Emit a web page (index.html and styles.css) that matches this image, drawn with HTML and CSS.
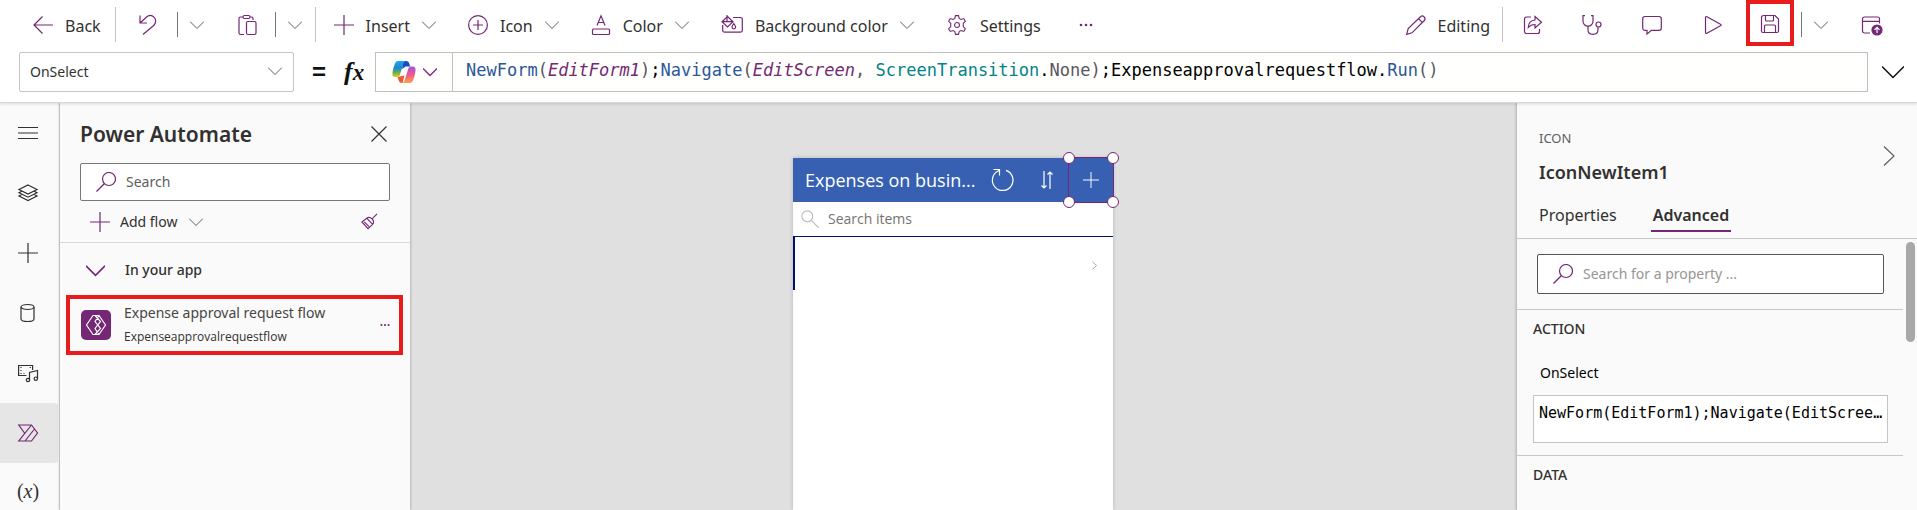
FILE: index.html
```html
<!DOCTYPE html>
<html lang="en">
<head>
<meta charset="utf-8">
<title>Power Apps Studio</title>
<link rel="stylesheet" href="styles.css">
</head>
<body>
<svg class="sprite" aria-hidden="true">
  <symbol id="chevron" viewBox="0 0 14 14"><path d="M0 3.500l7 7 7-7"/></symbol>
  <symbol id="search" viewBox="0 0 20 20"><circle cx="13" cy="7" r="6.500"/><path d="M8.500 11.500L.5 19.500"/></symbol>
  <symbol id="plus" viewBox="0 0 20 20"><path d="M10 0v20M0 10h20"/></symbol>
</svg>
<div class="app">
  <header class="header">
    <div class="toolbar">
      <div class="tools">
        <button class="tool back"><svg class="icon" viewBox="0 0 20 20"><path d="M20 10H1M9.500 1.500L1 10l8.500 8.500"/></svg><span>Back</span></button>
        <i class="rule tall"></i>
        <button class="tool undo" aria-label="Undo"><svg class="icon" viewBox="0 0 20 20"><path d="M2 .5v7.500h7M2.500 7.500L8 2.500C11-.2 14 .2 16 2.200s2.500 5.500-.3 8.300L5 19.500"/></svg></button>
        <i class="rule"></i>
        <button class="tool drop" aria-label="Undo options"><svg class="chev"><use href="#chevron"/></svg></button>
        <button class="tool paste" aria-label="Paste"><svg class="icon" viewBox="0 0 20 20"><path d="M7 19.500H3.500a1.500 1.500 0 0 1-1.500-1.500V3.500A1.500 1.500 0 0 1 3.500 2H6m7 0h1.500A1.500 1.500 0 0 1 16 3.500V5"/><rect x="6" y=".5" width="7" height="3" rx="1.500"/><rect x="9.500" y="6.500" width="9.500" height="13" rx="1.500"/></svg></button>
        <i class="rule"></i>
        <button class="tool drop last" aria-label="Paste options"><svg class="chev"><use href="#chevron"/></svg></button>
        <i class="rule tall"></i>
        <div class="commands">
          <button class="tool"><svg class="icon"><use href="#plus"/></svg><span>Insert</span><svg class="chev"><use href="#chevron"/></svg></button>
          <button class="tool"><svg class="icon" viewBox="0 0 20 20"><circle cx="10" cy="10" r="9.400"/><path d="M10 5v10M5 10h10"/></svg><span>Icon</span><svg class="chev"><use href="#chevron"/></svg></button>
          <button class="tool"><svg class="icon" viewBox="0 0 20 20"><path d="M6 10.500L10 .8l4 9.700M7.300 7.500h5.400"/><rect x="1.500" y="14" width="17" height="5.500" rx="1"/></svg><span>Color</span><svg class="chev"><use href="#chevron"/></svg></button>
          <button class="tool"><svg class="icon wide" viewBox="0 0 22 20"><path d="M6 0v7M6.500 1.500l5.500 5.300-5.500 5.200L1 6.700zM1.500 6.700h10M12 2.500h7.500a1.800 1.800 0 0 1 1.800 1.800v11a1.800 1.800 0 0 1-1.800 1.800h-16a1.800 1.800 0 0 1-1.800-1.800V10M12.800 8.500c1.200 1.700 1.800 2.700 1.800 3.500a1.800 1.800 0 0 1-3.600 0c0-.8.600-1.800 1.800-3.500z"/></svg><span>Background color</span><svg class="chev"><use href="#chevron"/></svg></button>
          <button class="tool"><svg class="icon wide" viewBox="0 0 22 22"><path d="M9.300.7h3.400l.7 3.100 2 1.100 3-1 1.800 3-2.300 2.200v3.800l2.300 2.200-1.800 3-3-1-2 1.100-.7 3.100H9.300l-.7-3.100-2-1.100-3 1-1.800-3 2.300-2.200V9.100L1.800 6.900l1.800-3 3 1 2-1.100z"/><circle cx="11" cy="11" r="2.700"/></svg><span>Settings</span></button>
          <button class="tool more" aria-label="More commands"><svg class="dots" viewBox="0 0 14 4"><circle cx="2" cy="2" r="1.300"/><circle cx="7" cy="2" r="1.300"/><circle cx="12" cy="2" r="1.300"/></svg></button>
        </div>
      </div>
      <div class="tools end">
        <button class="tool editing"><svg class="icon" viewBox="0 0 20 20"><path d="M.7 19.300l1.500-5.800L14.500 1.700a2.700 2.700 0 0 1 3.800 3.800L6 17.800zM12.500 3.600l4 4"/></svg><span>Editing</span></button>
        <i class="rule tall"></i>
        <button class="tool share" aria-label="Share"><svg class="icon" viewBox="0 0 20 20"><path d="M8 2H3.500A2 2 0 0 0 1.500 4v12.500a2 2 0 0 0 2 2h11a2 2 0 0 0 2-2V14M12 1.500l6.500 5.700L12 13V9.500c-3 0-5 .8-6.700 3C5.500 8 8 5.200 12 5z"/></svg></button>
        <button class="tool check" aria-label="App checker"><svg class="icon" viewBox="0 0 20 20"><path d="M3 .7H1v5.500a5 5 0 0 0 10 0V.7H9M6 11.200v3.500c0 3 2 4.600 4.800 4.600s5.200-1.600 5.200-4.600v-2.500"/><circle cx="16.500" cy="9.500" r="2.500"/></svg></button>
        <button class="tool comment" aria-label="Comments"><svg class="icon" viewBox="0 0 20 20"><path d="M3 1.500h14A2.300 2.300 0 0 1 19.300 4v9a2.300 2.300 0 0 1-2.300 2.300H9.500L5 19v-3.700H3A2.300 2.300 0 0 1 .7 13V4A2.300 2.300 0 0 1 3 1.500z"/></svg></button>
        <button class="tool play" aria-label="Preview the app"><svg class="icon" viewBox="0 0 20 20"><path d="M2.500 2.500c0-.8.700-1.200 1.400-.8l13.600 7.500c.8.400.8 1.200 0 1.600L3.900 18.300c-.7.400-1.400 0-1.400-.8z"/></svg></button>
        <button class="tool save" aria-label="Save"><svg class="icon" viewBox="0 0 20 20"><path d="M3.500 1.500H15L18.500 5v12a1.500 1.500 0 0 1-1.500 1.500H3A1.500 1.500 0 0 1 1.500 17V3.500a2 2 0 0 1 2-2zM5.500 1.500V6A1 1 0 0 0 6.500 7h6a1 1 0 0 0 1-1V1.500M4.500 18.500V12a1 1 0 0 1 1-1h9a1 1 0 0 1 1 1v6.500"/></svg></button>
        <i class="rule"></i>
        <button class="tool drop" aria-label="Save options"><svg class="chev"><use href="#chevron"/></svg></button>
        <button class="tool publish" aria-label="Publish"><svg class="icon wide" viewBox="0 0 22 20"><path d="M9 18H3.500a2 2 0 0 1-2-2V4a2 2 0 0 1 2-2h13a2 2 0 0 1 2 2v4.500M1.500 6.300h17"/><circle class="solid" cx="16" cy="15" r="5"/><path class="white" d="M16 18v-5.500M13.500 14.800l2.500-2.500 2.500 2.500"/></svg></button>
      </div>
    </div>
    <div class="formula-row">
      <div class="property">
        <select aria-label="Property"><option>OnSelect</option></select>
        <svg class="chev"><use href="#chevron"/></svg>
      </div>
      <span class="equals">=</span>
      <span class="fx"><b>f</b>x</span>
      <div class="formula">
        <button class="copilot" aria-label="Copilot">
          <svg class="copilot-logo" viewBox="0 0 24 22">
            <defs>
              <linearGradient id="cool" x1="0" y1="0" x2="0" y2="1"><stop offset="0" stop-color="#1ba6ee"/><stop offset=".45" stop-color="#1f86c9"/><stop offset=".7" stop-color="#5bb35a"/><stop offset="1" stop-color="#f2c511"/></linearGradient>
              <linearGradient id="warm" x1="0" y1="0" x2="0" y2="1"><stop offset="0" stop-color="#a550ea"/><stop offset=".5" stop-color="#ee5b86"/><stop offset="1" stop-color="#fba052"/></linearGradient>
            </defs>
            <path fill="#1a49c0" d="M11 0h3c2 0 2.800 1 3.300 2.800l.9 2.700h-4.500L10 8z"/>
            <path fill="#ee5a35" d="M5.500 16l7-1.500L10.500 22H10c-2 0-2.800-1-3.300-2.800z"/>
            <path fill="url(#cool)" d="M6.500 0H14c-1.500.3-2.200 1.500-2.700 3L8 13.500C7.400 15.300 6.500 16 5 16H3.600C1 16 0 14.500.5 11.500 1 8 2 5 3 2.500 3.700.8 4.700 0 6.500 0z"/>
            <path fill="url(#warm)" d="M17.500 22H10c1.500-.3 2.200-1.500 2.700-3L16 8.500C16.600 6.700 17.500 5.500 19 5.500h1.400c2.600 0 3.600 1.500 3.100 4.500-.5 3.500-1.500 7-2.500 9.500-.7 1.700-1.700 2.500-3.500 2.500z"/>
          </svg>
          <svg class="chev"><use href="#chevron"/></svg>
        </button>
        <code class="code"><span class="fn">NewForm</span><span class="pn">(</span><em>EditForm1</em><span class="pn">)</span>;<span class="fn">Navigate</span><span class="pn">(</span><em>EditScreen</em><span class="pn">,</span> <span class="en">ScreenTransition</span>.<span class="pn">None)</span>;Expenseapprovalrequestflow.<span class="fn">Run</span><span class="pn">()</span></code>
      </div>
      <button class="expand" aria-label="Expand formula bar"><svg class="chev"><use href="#chevron"/></svg></button>
    </div>
  </header>
  <main class="body">
    <nav class="rail">
      <button aria-label="Menu"><svg class="icon" viewBox="0 0 20 20"><path d="M0 4.500h20M0 10h20M0 15.500h20"/></svg></button>
      <button aria-label="Tree view"><svg class="icon" viewBox="0 0 20 20"><path d="M10 2l9 4.500-9 4.500-9-4.500zM3.800 8.200L1 9.700l9 4.500 9-4.500-2.800-1.500M3.800 11.500L1 13l9 4.500 9-4.500-2.800-1.500"/></svg></button>
      <button aria-label="Insert"><svg class="icon"><use href="#plus"/></svg></button>
      <button aria-label="Data"><svg class="icon" viewBox="0 0 20 20"><ellipse cx="9.500" cy="4" rx="6.500" ry="2.500"/><path d="M3 4v12c0 1.500 2.700 2.500 6.500 2.500S16 17.500 16 16V4"/></svg></button>
      <button aria-label="Media"><svg class="icon" viewBox="0 0 20 20"><path d="M8.500 12.500H.6v-10h14v4.500"/><path stroke-dasharray="1 2" d="M3 4v8M12.300 4v3M2.500 10.500h6"/><path d="M11.500 17V9.500l8-2v8"/><circle cx="10" cy="17" r="1.700"/><circle cx="17.800" cy="15.700" r="1.700"/></svg></button>
      <button class="active" aria-label="Power Automate"><svg class="icon" viewBox="0 0 20 20"><path d="M6.500 10L.8 2h12.700l6 8-6 8H.8L13.500 2M7 18l9.500-12"/></svg></button>
      <button class="vars" aria-label="Variables">(<i>x</i>)</button>
    </nav>
    <section class="panel">
      <div class="panel-head"><h2>Power Automate</h2><button class="close" aria-label="Close"><svg class="icon" viewBox="0 0 16 16"><path d="M.5.5l15 15M15.500.5l-15 15"/></svg></button></div>
      <label class="search"><svg class="icon"><use href="#search"/></svg><input type="text" placeholder="Search" aria-label="Search flows"></label>
      <div class="add-row">
        <button class="tool add"><svg class="icon"><use href="#plus"/></svg><span>Add flow</span><svg class="chev"><use href="#chevron"/></svg></button>
        <button class="tool" aria-label="Clear unused flows"><svg class="broom" viewBox="0 0 18 18"><path d="M17 1l-5 5M6 5.500C8 4 10 4.500 11.700 6.200s2 4 .6 5.800M6 5.500l6.300 6.500M6 5.500L1 9.500l6.500 7 4.800-4.500M3.500 9.500l5 5"/></svg></button>
      </div>
      <button class="group"><svg class="chev"><use href="#chevron"/></svg><span>In your app</span></button>
      <article class="flow">
        <svg class="flow-logo" viewBox="0 0 30 30"><rect width="30" height="30" rx="5"/><path d="M5.500 15L12 5.500h6L24.500 15 18 24.500h-6zM14 5.500l5.500 6L14 18.500l4 6M18 5.500l-4 6 5.500 7-5.500 6"/></svg>
        <div class="flow-text"><strong>Expense approval request flow</strong><small>Expenseapprovalrequestflow</small></div>
        <button class="tool" aria-label="More actions"><svg class="dots small" viewBox="0 0 14 4"><circle cx="2" cy="2" r="1.500"/><circle cx="7" cy="2" r="1.500"/><circle cx="12" cy="2" r="1.500"/></svg></button>
      </article>
    </section>
    <section class="canvas">
      <div class="phone">
        <div class="phone-head">
          <h3>Expenses on busin...</h3>
          <button aria-label="Refresh"><svg class="reload" viewBox="0 0 24 24"><path d="M15 2.400A10.300 10.300 0 1 1 7 3L8.500 2M2.500 1.500h6v6"/></svg></button>
          <button aria-label="Sort"><svg class="sort" viewBox="0 0 12 20"><path d="M3 1v17M.5 15.500L3 18l2.500-2.500M9 19V2M6.500 4.500L9 2l2.500 2.500"/></svg></button>
          <button class="selected" aria-label="New item"><svg class="new"><use href="#plus"/></svg><i class="tl"></i><i class="tr"></i><i class="bl"></i><i class="br"></i></button>
        </div>
        <label class="phone-search"><svg viewBox="0 0 20 20"><circle cx="7" cy="7" r="6"/><path d="M11.500 11.500l8 8"/></svg><input type="text" placeholder="Search items" aria-label="Search items"></label>
        <div class="gallery"><svg viewBox="0 0 6 10"><path d="M.5.5L5.500 5 .5 9.500"/></svg></div>
      </div>
    </section>
    <aside class="props">
      <div class="props-head">
        <div><p>ICON</p><h2>IconNewItem1</h2></div>
        <button aria-label="Collapse"><svg viewBox="0 0 12 20"><path d="M1 .5L11 10 1 19.500"/></svg></button>
      </div>
      <div class="tabs" role="tablist"><button role="tab">Properties</button><button role="tab" aria-selected="true">Advanced</button></div>
      <div class="props-scroll">
        <div class="props-body">
          <div class="search-wrap"><label class="search"><svg class="icon"><use href="#search"/></svg><input type="text" placeholder="Search for a property ..." aria-label="Search for a property"></label></div>
          <section class="action"><h4>ACTION</h4><label for="onselect">OnSelect</label><textarea id="onselect" rows="1">NewForm(EditForm1);Navigate(EditScree…</textarea></section>
          <section class="action"><h4>DATA</h4></section>
        </div>
        <div class="track"><i class="thumb"></i></div>
      </div>
    </aside>
  </main>
</div>
</body>
</html>
```
FILE: styles.css
```css
* { box-sizing: border-box; }
body {
  margin: 0;
  font: 14px/20px "Noto Sans", "Open Sans", sans-serif;
  color: #323130;
  background: #fff;
}
.app { display: flex; flex-direction: column; height: 100vh; overflow: hidden; }
h2, h3, h4, p { margin: 0; }
button, input, textarea, select { font: inherit; color: inherit; }
button { border: 0; padding: 0; background: none; display: flex; align-items: center; justify-content: center; }
svg { display: block; flex: none; fill: none; stroke: #742774; stroke-width: 1.2; overflow: visible; }
.sprite { position: absolute; width: 0; height: 0; }
.icon { width: 20px; height: 20px; }
.icon.wide { width: 22px; }
.chev { width: 14px; height: 14px; stroke: #605e5c; stroke-width: 1; }
.dots { width: 14px; height: 4px; fill: #742774; stroke: none; }
.dots.small { width: 10px; }

.header { flex: none; position: relative; z-index: 2; background: #fff; border-bottom: 1px solid #d8d8d8; box-shadow: 0 1px 3px #0002; }
.toolbar { display: flex; justify-content: space-between; height: 52px; padding-bottom: 3px; }
.tools { display: flex; align-items: center; padding-left: 33px; }
.tools.end { padding: 0 34px 0 0; }
.tool { gap: 12px; font-size: 16px; line-height: 24px; white-space: nowrap; }
.toolbar .tool span { padding-top: 2px; }
.rule { width: 1px; height: 25px; background: #777; }
.rule.tall { height: 35px; background: #c4c4c4; }
.back { margin-right: 14px; }
.undo { margin: 0 19px 0 22px; }
.drop { margin-left: 12px; }
.drop.last { margin-right: 13px; }
.paste { margin: 0 18px 0 33px; }
.commands { display: flex; gap: 32px; padding-left: 18px; }
.more { margin-left: 6px; }
.editing { margin-right: 12px; }
.share { margin-left: 20px; }
.check { margin-left: 39px; }
.comment { margin-left: 40px; }
.play { margin-left: 41px; }
.save { width: 48px; height: 46px; margin: 0 7px 0 23px; padding-top: 2px; align-self: flex-start; border: 4px solid #e81c1c; }
.publish { margin-left: 33px; }
.publish .solid { fill: #742774; }
.publish .white { stroke: #fff; }

.formula-row { display: flex; align-items: center; height: 50px; padding: 0 0 10px 19px; }
.property { position: relative; width: 275px; height: 40px; }
.property select { appearance: none; width: 100%; height: 100%; padding: 0 10px; border: 1px solid #c8c6c4; border-radius: 2px; background: #fff; font-size: 14px; }
.property .chev { position: absolute; right: 12px; top: 12px; pointer-events: none; }
.equals { margin-left: 18px; width: 18px; font: bold 24px/24px "Liberation Sans", sans-serif; color: #111; }
.fx { margin-left: 14px; width: 31px; font: italic bold 23px/28px "Liberation Serif", serif; color: #111; }
.fx b { font-size: 26px; }
.formula { flex: 1; display: flex; height: 40px; border: 1px solid #c0c0c0; background: #fffffd; }
.copilot { width: 77px; gap: 7px; border-right: 1px solid #c0c0c0; }
.copilot-logo { width: 24px; height: 22px; stroke: none; }
.copilot .chev { stroke: #8a2a8a; stroke-width: 1.5; }
.code { padding-left: 13px; font: 17px/35px "DejaVu Sans Mono", "Liberation Mono", monospace; color: #000; white-space: nowrap; }
.fn { color: #2b5797; }
.pn { color: #5a5560; }
.code em { color: #742774; }
.en { color: #038387; }
.expand { width: 49px; }
.expand .chev { width: 22px; height: 22px; stroke: #111; }

.body { flex: 1; display: flex; min-height: 0; background: #e0e0e0; }
.rail { flex: none; width: 60px; background: #fafafa; border-right: 1px solid #dcdcdc; }
.rail button { width: 58px; height: 60px; padding-right: 2px; border-radius: 0 3px 3px 0; }
.rail svg { stroke: #323130; }
.rail .active { background: #e6e6e6; }
.rail .active svg { stroke: #742774; }
.rail .vars { padding-bottom: 4px; font: 20px/24px "Liberation Serif", serif; }

.panel { flex: none; width: 350px; background: #fafafa; box-shadow: 0 0 3px #0005; z-index: 1; }
.panel-head { display: flex; justify-content: space-between; align-items: center; height: 60px; padding: 2px 23px 0 20px; }
.panel-head h2 { font-size: 21px; line-height: 28px; font-weight: 600; }
.close svg { width: 16px; height: 16px; stroke: #323130; }
.search { display: flex; align-items: center; gap: 10px; height: 38px; padding: 0 15px; border: 1px solid #777; border-radius: 2px; background: #fff; }
.panel .search { margin: 0 20px; }
.search input { flex: 1; min-width: 0; padding: 0; border: 0; background: none; outline: 0; font-size: 14px; }
.search input::placeholder { color: #605e5c; opacity: 1; }
.add-row { display: flex; justify-content: space-between; align-items: center; height: 42px; padding: 0 32px 0 30px; border-bottom: 1px solid #d8d8d8; }
.add { gap: 10px; font-size: 14px; }
.add .chev { margin-left: 2px; }
.broom { width: 17px; height: 17px; }
.group { gap: 20px; height: 52px; padding: 2px 0 0 26px; font-weight: 500; }
.group .chev { width: 19px; height: 19px; stroke: #742774; stroke-width: 1.2; }
.flow { display: flex; align-items: center; height: 60px; margin: 0 7px 0 6px; padding: 0 9px 0 11px; border: 4px solid #e81c1c; }
.flow-logo { width: 30px; height: 30px; }
.flow-logo rect { fill: #742774; stroke: none; }
.flow-logo path { stroke: #fff; }
.flow-text { flex: 1; display: flex; flex-direction: column; padding-left: 13px; white-space: nowrap; }
.flow-text strong { font-weight: 400; font-size: 14px; line-height: 24px; color: #484644; }
.flow-text small { font-size: 12px; line-height: 24px; font-family: "Open Sans", sans-serif; }

.canvas { flex: 1; min-width: 0; display: flex; justify-content: center; padding: 55px 20px 0 0; overflow: hidden; }
.phone { width: 320px; background: #fff; box-shadow: 0 0 4px #0003; font-family: "Open Sans", sans-serif; }
.phone-head { display: flex; align-items: center; height: 44px; padding-left: 12px; background: #3860b2; color: #fff; }
.phone-head h3 { flex: 1; font-size: 18px; line-height: 24px; font-weight: 400; white-space: nowrap; }
.phone-head svg { stroke: #fff; }
.phone-head button { width: 44px; height: 44px; }
.reload { width: 24px; height: 24px; }
.sort { width: 12px; height: 20px; }
.phone-head .selected { position: relative; height: 44px; outline: 1px solid #742774; }
.new { width: 16px; height: 16px; }
.selected i { position: absolute; width: 12px; height: 12px; border: 1px solid #742774; border-radius: 50%; background: #fff; }
.selected .tl { left: -6px; top: -6px; }
.selected .tr { right: -6px; top: -6px; }
.selected .bl { left: -6px; bottom: -6px; }
.selected .br { right: -6px; bottom: -6px; }
.phone-search { display: flex; align-items: center; gap: 9px; height: 34px; padding-left: 8px; }
.phone-search svg { width: 18px; height: 18px; stroke: #b8b8b8; }
.phone-search input { flex: 1; min-width: 0; border: 0; padding: 0; font-size: 14px; background: none; }
.phone-search input::placeholder { color: #737373; opacity: 1; }
.gallery { display: flex; align-items: center; justify-content: flex-end; height: 54px; padding: 3px 16px 0 0; border-top: 1px solid #000f6b; border-left: 2px solid #000f6b; }
.gallery svg { width: 5px; height: 9px; stroke: #aaa; }

.props { flex: none; width: 401px; display: flex; flex-direction: column; background: #fafafa; border-left: 1px solid #c0c0c0; box-shadow: 0 0 3px #0003; }
.props-head { display: flex; justify-content: space-between; padding: 25px 22px 0 22px; }
.props-head p { font-size: 13px; line-height: 20px; color: #605e5c; }
.props-head h2 { margin-top: 12px; font-size: 18px; line-height: 24px; font-weight: 600; }
.props-head svg { width: 12px; height: 20px; stroke: #605e5c; }
.tabs { display: flex; gap: 32px; margin-top: 14px; height: 41px; padding: 0 20px; border-bottom: 1px solid #c8c8c8; }
.tabs button { height: 34px; padding: 1px 2px 0; font-size: 16px; border-bottom: 2px solid transparent; }
.tabs [aria-selected] { font-weight: 600; border-color: #742774; }
.props-scroll { flex: 1; display: flex; min-height: 0; overflow: hidden; }
.props-body { flex: 1; min-width: 0; }
.search-wrap { padding: 15px 19px 15px 20px; }
.search-wrap .search { height: 40px; border-color: #555; }
.search-wrap .search input::placeholder { color: #979593; }
.action { border-top: 1px solid #c8c8c8; padding: 9px 15px 12px 16px; }
.action h4 { font-size: 14px; line-height: 20px; font-weight: 500; }
.action label { display: block; margin: 24px 0 12px 7px; color: #000; }
.action textarea { display: block; width: 100%; height: 48px; padding: 6px 5px; border: 1px solid #c4c4c4; background: #fff; font: 15px/22px "DejaVu Sans Mono", "Liberation Mono", monospace; color: #000; resize: none; overflow: hidden; white-space: pre; }
.track { width: 14px; padding: 3px 2px 0 3px; }
.thumb { display: block; height: 100px; border-radius: 5px; background: #a8a8a8; }
```
